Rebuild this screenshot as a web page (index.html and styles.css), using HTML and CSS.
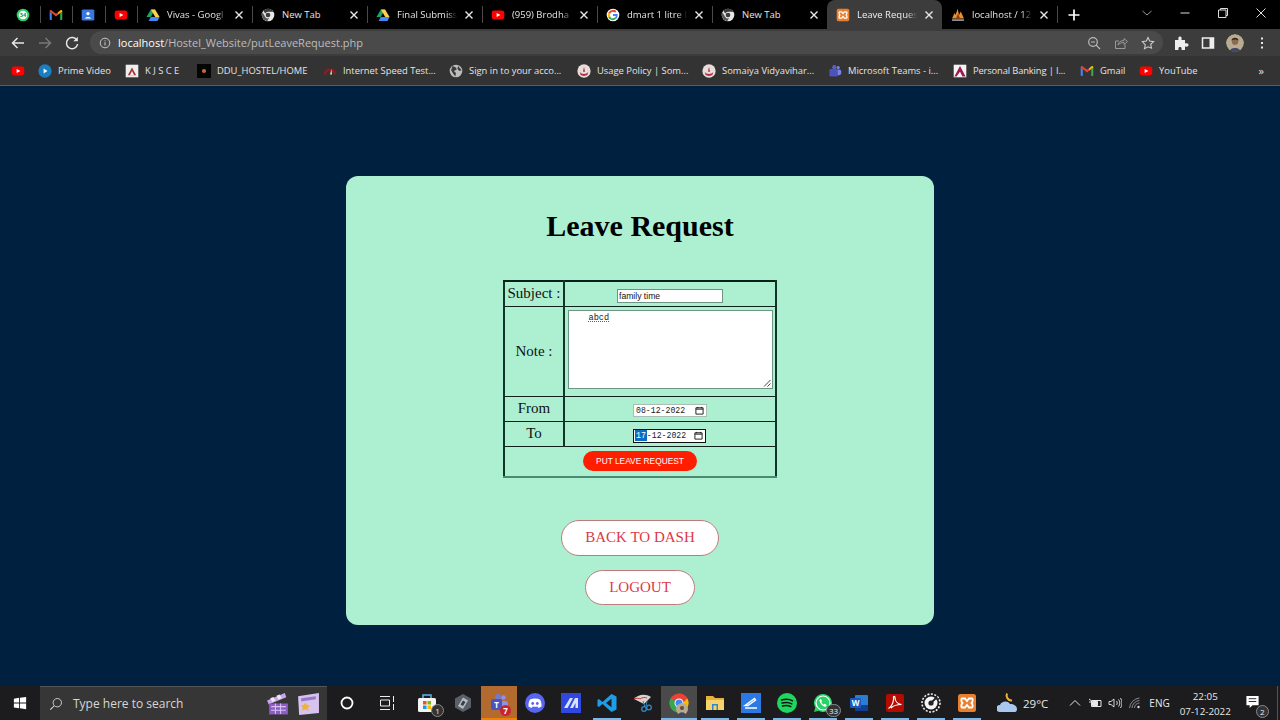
FILE: index.html
```html
<!DOCTYPE html>
<html lang="en">
<head>
<meta charset="utf-8">
<title>Leave Request</title>
<link rel="stylesheet" href="styles.css">
</head>
<body>
<svg class="defs" width="0" height="0" aria-hidden="true">
  <defs>
    <symbol id="i-yt" viewBox="0 0 20 20"><rect x="1" y="3.5" width="18" height="13" rx="3.5" fill="#f00"/><path d="M8 7l5.5 3L8 13z" fill="#fff"/></symbol>
    <symbol id="i-drive" viewBox="0 0 20 20"><path d="M7 2h6l-6.2 11H.6z" fill="#1fa463"/><path d="M13 2l6.4 11h-6.2L7 2z" fill="#ffd04b"/><path d="M6.8 13h12.6l-3 5.5H3.7z" fill="#4688f4"/></symbol>
    <symbol id="i-chrome" viewBox="0 0 20 20"><circle cx="10" cy="10" r="9" fill="#e8e8e8"/><path d="M10 1a9 9 0 0 1 7.8 4.5H10a4.5 4.5 0 0 0-3.9 2.2L3.3 4A9 9 0 0 1 10 1z" fill="#3a3a3a"/><path d="M5.7 12.2L2.2 6A9 9 0 0 0 9 19l2.6-4.6a4.600 4.600 0 0 1-5.900-2.200z" fill="#5a5a5a"/><circle cx="10" cy="10" r="3.300" fill="#3c3c3c"/></symbol>
    <symbol id="i-gmail" viewBox="0 0 20 20"><path d="M1 5.500l3 1.800V17H2.200A1.200 1.200 0 0 1 1 15.800z" fill="#4285f4"/><path d="M19 5.500l-3 1.800V17h1.800a1.200 1.200 0 0 0 1.200-1.200z" fill="#34a853"/><path d="M4 7.300L1 5.500V4.600C1 3.300 2.500 2.500 3.500 3.300L10 8.200l3-2.200v3.800l-3 2.200z" fill="#ea4335"/><path d="M13 6l3.500-2.700c1-.8 2.500 0 2.500 1.300v.9l-3 1.800-3 2.500z" fill="#fbbc04"/></symbol>
    <symbol id="i-somaiya" viewBox="0 0 20 20"><circle cx="10" cy="10" r="9.500" fill="#e8dcdc"/><path d="M4 11.500c2 3.500 10 3.500 12 0l-1 4c-2 2-8 2-10 0z" fill="#b03040"/><path d="M10 4l1.500 7h-3z" fill="#b03040"/></symbol>
    <symbol id="i-xampp" viewBox="0 0 20 20"><rect x="1" y="1" width="18" height="18" rx="2.500" fill="#e9802f"/><path d="M5 5.500h3l2 2.500 2-2.500h3c1 0 1 3-.5 4.500 1.500 1.500 1.500 4.500.5 4.500h-3l-2-2.500-2 2.500H5c-1 0-1-3 .5-4.500C4 8.500 4 5.500 5 5.500z" fill="none" stroke="#fff" stroke-width="1.800"/></symbol>
    <symbol id="i-close" viewBox="0 0 10 10"><path d="M1.500 1.500l7 7m0-7l-7 7" stroke="#e8e8e8" stroke-width="1.400" fill="none"/></symbol>
    <symbol id="i-calendar" viewBox="0 0 10 10"><path d="M1 2h8v7H1zM1 3.500h8M3 1v1.500M7 1v1.500" stroke="#111" stroke-width="1" fill="none"/></symbol>
  </defs>
</svg>

<header class="chrome">
  <div class="tabstrip">
    <div class="tab pinned"><svg class="favicon" viewBox="0 0 20 20"><circle cx="10" cy="10" r="9" fill="#25d366"/><circle cx="10" cy="10" r="6.200" fill="#fff"/><text x="10" y="13" class="svg-badge" fill="#128c4e">34</text></svg></div>
    <div class="tab pinned"><svg class="favicon"><use href="#i-gmail"/></svg></div>
    <div class="tab pinned"><svg class="favicon" viewBox="0 0 20 20"><rect x="1" y="2" width="18" height="16" rx="2" fill="#3a78e0"/><circle cx="10" cy="8" r="2.300" fill="#fff"/><path d="M5.500 15c.5-3 8.500-3 9 0z" fill="#fff"/></svg></div>
    <div class="tab pinned"><svg class="favicon"><use href="#i-yt"/></svg></div>
    <div class="tab"><svg class="favicon"><use href="#i-drive"/></svg><span class="tab-title">Vivas - Googl</span><svg class="tab-close"><use href="#i-close"/></svg></div>
    <div class="tab"><svg class="favicon"><use href="#i-chrome"/></svg><span class="tab-title plain">New Tab</span><svg class="tab-close"><use href="#i-close"/></svg></div>
    <div class="tab"><svg class="favicon"><use href="#i-drive"/></svg><span class="tab-title">Final Submissi</span><svg class="tab-close"><use href="#i-close"/></svg></div>
    <div class="tab"><svg class="favicon"><use href="#i-yt"/></svg><span class="tab-title">(959) Brodha V</span><svg class="tab-close"><use href="#i-close"/></svg></div>
    <div class="tab"><svg class="favicon" viewBox="0 0 20 20"><circle cx="10" cy="10" r="9" fill="#fff"/><path d="M10 5.500a4.500 4.500 0 0 1 3 1.200l2-2A7.500 7.500 0 0 0 3.300 6.600l2.400 1.900A4.500 4.500 0 0 1 10 5.500z" fill="#ea4335"/><path d="M5.700 11.500l-2.400 1.900a7.500 7.500 0 0 0 3 3.100l2-2a4.500 4.500 0 0 1-2.600-3z" fill="#34a853"/><path d="M3.300 6.600a7.500 7.500 0 0 0 0 6.800l2.400-1.900a4.500 4.500 0 0 1 0-3z" fill="#fbbc04"/><path d="M10 8.500v3h4.200a3.800 3.800 0 0 1-1.600 2.200l2 1.800c1.700-1.500 2.400-4.200 1.900-7z" fill="#4285f4"/><path d="M6.300 16.500a7.500 7.500 0 0 0 8.300-1l-2-1.800a4.500 4.500 0 0 1-4.300.8z" fill="#34a853"/></svg><span class="tab-title">dmart 1 litre b</span><svg class="tab-close"><use href="#i-close"/></svg></div>
    <div class="tab"><svg class="favicon"><use href="#i-chrome"/></svg><span class="tab-title plain">New Tab</span><svg class="tab-close"><use href="#i-close"/></svg></div>
    <div class="tab active"><svg class="favicon"><use href="#i-xampp"/></svg><span class="tab-title">Leave Reques</span><svg class="tab-close"><use href="#i-close"/></svg></div>
    <div class="tab no-sep-start"><svg class="favicon" viewBox="0 0 20 20"><path d="M1.500 15L5 7l1.500 3L9.500 1l2 9L14 5l4.500 10z" fill="#e8912d"/><path d="M7 15l3-7 3 7z" fill="#8f3f14"/><path d="M1.500 16h17v2.500h-17z" fill="#8a93a8"/></svg><span class="tab-title">localhost / 12</span><svg class="tab-close"><use href="#i-close"/></svg></div>
    <div class="new-tab"><svg class="win-icon" viewBox="0 0 12 12"><path d="M6 .5v11M.5 6h11" stroke="#fff" stroke-width="1.700"/></svg></div>
    <div class="window-controls">
      <span class="win-btn"><svg class="win-icon" viewBox="0 0 12 12"><path d="M1.500 4l4.500 4 4.500-4" stroke="#9a9a9a" fill="none"/></svg></span>
      <span class="win-btn"><svg class="win-icon" viewBox="0 0 12 12"><path d="M1.500 6h9" stroke="#ddd"/></svg></span>
      <span class="win-btn"><svg class="win-icon" viewBox="0 0 12 12"><path d="M1.500 3h7.500v7.500H1.500zM3.500 3V1.500H10.500V8.500H9" stroke="#ddd" fill="none"/></svg></span>
      <span class="win-btn"><svg class="win-icon" viewBox="0 0 12 12"><path d="M1.500 1.500l9 9m0-9l-9 9" stroke="#ddd" fill="none"/></svg></span>
    </div>
  </div>

  <div class="toolbar">
    <svg class="tool-icon" viewBox="0 0 16 16"><path d="M14 8H2.500M7.500 3L2.500 8l5 5" stroke="#e8e8e8" stroke-width="1.500" fill="none"/></svg>
    <svg class="tool-icon" viewBox="0 0 16 16"><path d="M2 8h11.500M8.500 3l5 5-5 5" stroke="#777" stroke-width="1.500" fill="none"/></svg>
    <svg class="tool-icon" viewBox="0 0 16 16"><path d="M13 5.500A5.600 5.600 0 1 0 13.600 9" stroke="#e8e8e8" stroke-width="1.500" fill="none"/><path d="M13.800 1.800v4.500H9.300z" fill="#e8e8e8"/></svg>
    <div class="omnibox">
      <svg class="omni-info" viewBox="0 0 12 12"><circle cx="6" cy="6" r="4.800" stroke="#c8c8c8" fill="none"/><path d="M6 5.200v3.300M6 3.300v1" stroke="#c8c8c8"/></svg>
      <span class="url"><b>localhost</b>/Hostel_Website/putLeaveRequest.php</span>
      <span class="omni-actions">
        <svg class="omni-icon" viewBox="0 0 14 14"><circle cx="6" cy="6" r="4.300" stroke="#bbb" stroke-width="1.200" fill="none"/><path d="M9.200 9.200L13 13M4 6h4" stroke="#bbb" stroke-width="1.200"/></svg>
        <svg class="omni-icon" viewBox="0 0 14 14"><path d="M11 8.500V12.500H1.500V5H5" stroke="#999" fill="none"/><path d="M4 9c.5-3 3-4.500 6-4.500V2.500L13.500 5.500 10 8.500V6.500c-2.500 0-4.500.8-6 2.500z" stroke="#999" fill="none"/></svg>
        <svg class="omni-icon" viewBox="0 0 14 14"><path d="M7 1.500l1.700 3.600 3.900.5-2.900 2.700.8 3.900L7 10.800l-3.500 1.900.8-3.900L1.400 5.600l3.900-.5z" stroke="#ccc" stroke-width="1.100" fill="none"/></svg>
      </span>
    </div>
    <div class="toolbar-end">
      <svg class="tool-icon" viewBox="0 0 16 16"><path d="M2 5h3.500C5 2 6 1.500 7 1.500S9 2 8.500 5H12v3.500c3-.5 3.500.5 3.500 1.500s-.5 2-3.500 1.500V15H8.500c.5-2.500-.5-3-1.500-3s-2 .5-1.500 3H2z" fill="#eee"/></svg>
      <svg class="tool-icon" viewBox="0 0 16 16"><path d="M2.500 3h11v10h-11z" stroke="#eee" stroke-width="1.500" fill="none"/><path d="M9.500 3h4v10h-4z" fill="#eee"/></svg>
      <svg class="tool-icon avatar" viewBox="0 0 20 20"><circle cx="10" cy="10" r="10" fill="#b9ab8f"/><path d="M4 20c0-6 12-6 12 0z" fill="#3f4763"/><circle cx="10" cy="8.500" r="3.500" fill="#8a6a50"/><path d="M6 7.500C6 3 14 3 14 7.500 12 5.500 8 5.500 6 7.500z" fill="#2a2320"/></svg>
      <svg class="tool-icon" viewBox="0 0 16 16"><path d="M8 2.500v2M8 7v2M8 11.500v2" stroke="#e8e8e8" stroke-width="2"/></svg>
    </div>
  </div>

  <nav class="bookmarks">
    <span class="bm"><svg class="favicon"><use href="#i-yt"/></svg></span>
    <span class="bm"><svg class="favicon" viewBox="0 0 20 20"><circle cx="10" cy="10" r="9.500" fill="#1a7fc0"/><path d="M8 6.500l5.500 3.500L8 13.500z" fill="#fff"/></svg>Prime Video</span>
    <span class="bm"><svg class="favicon" viewBox="0 0 20 20"><rect x="1" y="1" width="18" height="18" fill="#eee"/><path d="M4 16l6-11 6 11z" fill="#a33"/><path d="M7 16l3-6 3 6z" fill="#eee"/></svg>K J S C E</span>
    <span class="bm"><svg class="favicon" viewBox="0 0 20 20"><rect width="20" height="20" fill="#050505"/><circle cx="10" cy="10" r="3" fill="#c46a3a"/></svg>DDU_HOSTEL/HOME</span>
    <span class="bm"><svg class="favicon" viewBox="0 0 20 20"><path d="M1 15a9 9 0 0 1 18 0h-4a5 5 0 0 0-10 0z" fill="#8c1c20"/><path d="M10 15l2-8 1 8z" fill="#d8d8d8"/></svg>Internet Speed Test...</span>
    <span class="bm"><svg class="favicon" viewBox="0 0 20 20"><circle cx="10" cy="10" r="9" fill="#bdbdbd"/><path d="M5 3l5 2 1 3-4 2 3 3-1 5-3-4-3-5zM13 3l5 6-3 1-3-3z" fill="#3c3c3c"/></svg>Sign in to your acco...</span>
    <span class="bm"><svg class="favicon"><use href="#i-somaiya"/></svg>Usage Policy | Som...</span>
    <span class="bm"><svg class="favicon"><use href="#i-somaiya"/></svg>Somaiya Vidyavihar...</span>
    <span class="bm"><svg class="favicon" viewBox="0 0 20 20"><circle cx="14.500" cy="5" r="2.200" fill="#7b83eb"/><circle cx="9" cy="4.500" r="3" fill="#5b5fc7"/><rect x="11" y="8" width="8" height="8" rx="3" fill="#7b83eb"/><rect x="2" y="7" width="12" height="11" rx="2" fill="#4b53bc"/></svg>Microsoft Teams - i...</span>
    <span class="bm bm-tight"><svg class="favicon" viewBox="0 0 20 20"><rect x="1" y="1" width="18" height="18" fill="#f4f4f4"/><path d="M10 3l8 15h-4.500L10 11l-5 7H2z" fill="#a01850"/></svg>Personal Banking | I...</span>
    <span class="bm"><svg class="favicon"><use href="#i-gmail"/></svg>Gmail</span>
    <span class="bm"><svg class="favicon"><use href="#i-yt"/></svg>YouTube</span>
    <span class="bm-more">»</span>
  </nav>
</header>

<main class="page">
  <section class="card">
    <h1 class="card-title">Leave Request</h1>
    <form class="leave-form">
      <table class="leave-table">
        <tr class="row-subject">
          <th>Subject :</th>
          <td><input class="text-field" type="text" value="family time"></td>
        </tr>
        <tr class="row-note">
          <th>Note :</th>
          <td>
            <div class="note-field"><span class="note-text">abcd</span>
              <svg class="grip" viewBox="0 0 8 8"><path d="M7.500 1L1 7.500M7.500 4.500L4.500 7.500" stroke="#444" fill="none"/></svg>
            </div>
          </td>
        </tr>
        <tr class="row-date">
          <th>From</th>
          <td><span class="date-field"><span>08-12-2022</span><svg class="cal"><use href="#i-calendar"/></svg></span></td>
        </tr>
        <tr class="row-date">
          <th>To</th>
          <td><span class="date-field focused"><span><mark class="date-sel">17</mark>-12-2022</span><svg class="cal"><use href="#i-calendar"/></svg></span></td>
        </tr>
        <tr class="row-submit">
          <td colspan="2"><button class="submit-btn" type="button">PUT LEAVE REQUEST</button></td>
        </tr>
      </table>
    </form>
    <div class="card-links">
      <a class="pill-link" href="#">BACK TO DASH</a>
      <a class="pill-link" href="#">LOGOUT</a>
    </div>
  </section>
</main>

<footer class="taskbar">
  <span class="start"><svg class="start-icon" viewBox="0 0 16 16"><path d="M1 3l6-.9V7.500H1zM8 2l7-1v6.500H8zM1 8.500h6V14l-6-.9zM8 8.500h7V15l-7-1z" fill="#fff"/></svg></span>
  <div class="search">
    <svg class="search-icon" viewBox="0 0 16 16"><circle cx="9.500" cy="6.500" r="4.800" stroke="#ddd" fill="none"/><path d="M6 10L1.500 14.500" stroke="#ddd" stroke-width="1.200"/></svg>
    <span class="search-text">Type here to search</span>
    <svg class="search-art" viewBox="0 0 24 24"><path d="M2 9l17-7 1.500 4L3.500 13z" fill="#c9a6ea"/><path d="M5 7l3-1.200 2 3.500-3 1.200zM11 4.600l3-1.200 2 3.500-3 1.200z" fill="#f0e6fa"/><path d="M4 12h18v10.500H4z" fill="#8d5cc6"/><path d="M6 15h14M6 18.500h14M10 12v10M15 12v10" stroke="#d8c4ef"/></svg>
    <svg class="search-art" viewBox="0 0 24 24"><path d="M2 5l20-3v19L3 23z" fill="#d7c4ee"/><path d="M5 7l14-2v3L5 10z" fill="#9a78c8"/><path d="M9 11l1.500 2.500 3 .5-2 2 .5 3-3-1.500-3 1.500.5-3-2-2 3-.5z" fill="#f0b03a"/></svg>
  </div>
  <span class="task-wide"><svg class="task-icon" viewBox="0 0 20 20"><circle cx="10" cy="10" r="5.500" stroke="#fff" stroke-width="1.800" fill="none"/></svg></span>
  <span class="task-wide"><svg class="task-icon" viewBox="0 0 20 20"><path d="M3 3.500h10M3 16.500h10M3.500 7h9v6h-9zM16.500 3v6M16.500 11v6" stroke="#eee" fill="none"/></svg></span>
  <div class="task-list">
    <span class="task"><svg class="task-icon" viewBox="0 0 20 20"><rect x="1" y="5" width="18" height="14" rx="1.500" fill="#f4f4f4"/><path d="M6 5V2h8v3" stroke="#5fb7e8" fill="none" stroke-width="1.500"/><path d="M6 8h3.500v3.500H6z" fill="#f25022"/><path d="M10.500 8H14v3.500h-3.500z" fill="#7fba00"/><path d="M6 12.500h3.500V16H6z" fill="#00a4ef"/><path d="M10.500 12.500H14V16h-3.500z" fill="#ffb900"/></svg><b class="count">1</b></span>
    <span class="task"><svg class="task-icon" viewBox="0 0 20 20"><path d="M10 1l8 4.500v9L10 19l-8-4.500v-9z" fill="#59606a"/><path d="M10 4.500l5 3-5 8.500-5-3z" fill="#b8bcc2"/><path d="M10 7.500l2.500 1.500-2.500 4-2.500-1.500z" fill="#3a3f46"/></svg></span>
    <span class="task current-teams"><svg class="task-icon" viewBox="0 0 20 20"><circle cx="14.500" cy="4.500" r="2.200" fill="#8d92e8"/><circle cx="9" cy="4" r="3" fill="#7378d8"/><rect x="11" y="8" width="8" height="8" rx="3" fill="#8d92e8"/><rect x="2" y="6" width="11" height="11" rx="2" fill="#4b53bc"/><text x="7.500" y="14.500" class="svg-letter">T</text></svg><b class="teams-badge">7</b></span>
    <span class="task"><svg class="task-icon" viewBox="0 0 20 20"><circle cx="10" cy="10" r="10" fill="#5865f2"/><path d="M5 6.500c3-1.500 7-1.500 10 0 1.300 2.300 1.800 4.700 1.500 7-1.300 1-2.500 1.300-3.300 1.300l-.8-1.300c-1.600.4-3.200.4-4.800 0l-.8 1.300c-.8 0-2-.3-3.300-1.300-.3-2.300.2-4.700 1.500-7z" fill="#fff"/><circle cx="7.700" cy="10.500" r="1.400" fill="#5865f2"/><circle cx="12.300" cy="10.500" r="1.400" fill="#5865f2"/></svg></span>
    <span class="task"><svg class="task-icon" viewBox="0 0 20 20"><rect width="20" height="20" fill="#3048e0"/><path d="M3 15L9 5h3L6.500 15zM9 15l5-10h3v10h-2.500V10L12 15z" fill="#d8e2ff"/></svg></span>
    <span class="task running"><svg class="task-icon" viewBox="0 0 20 20"><path d="M14.500 1L19.500 3.500v13L14.500 19 5.500 11 1.800 14 .5 13V7l1.300-1L5.500 9z" fill="#1f9ce8"/><path d="M14.500 5.800L9 10l5.500 4.200z" fill="#1a1a1c"/></svg></span>
    <span class="task"><svg class="task-icon" viewBox="0 0 20 20"><path d="M1 6c3-4 11-6 17-2l-7 7z" fill="#d9d3cd"/><path d="M1 6c3-1 5-1 6 0M7 6c2-1.500 5-2 7-1" stroke="#c23838" fill="none"/><circle cx="11" cy="16" r="2.300" stroke="#2f88c6" stroke-width="1.300" fill="none"/><circle cx="16" cy="14.500" r="2.300" stroke="#2f88c6" stroke-width="1.300" fill="none"/><path d="M10 8l2 6M14 8l-1 5" stroke="#2f88c6"/></svg></span>
    <span class="task running current"><svg class="task-icon" viewBox="0 0 20 20"><circle cx="10" cy="10" r="9.500" fill="#ea4335"/><path d="M10 .5a9.500 9.500 0 0 1 8.200 4.700L10 10z" fill="#ea4335"/><path d="M18.200 5.200A9.500 9.500 0 0 1 10 19.500L14 10z" fill="#fbbc04"/><path d="M1.800 5.200A9.500 9.500 0 0 0 10 19.500L10 10z" fill="#34a853"/><circle cx="10" cy="10" r="4.500" fill="#fff"/><circle cx="10" cy="10" r="3.500" fill="#4285f4"/></svg><svg class="profile-mini" viewBox="0 0 20 20"><circle cx="10" cy="10" r="10" fill="#b9ab8f"/><path d="M4 20c0-6 12-6 12 0z" fill="#3f4763"/><circle cx="10" cy="8.500" r="3.500" fill="#6b4f3a"/></svg></span>
    <span class="task running"><svg class="task-icon" viewBox="0 0 20 20"><path d="M1 3h7l2 2h9v4H1z" fill="#e6b13c"/><path d="M1 7h18v10H1z" fill="#f7d36b"/><path d="M7 11h6v6h-1.500v-4.500h-3V17H7z" fill="#2f88c6"/></svg></span>
    <span class="task running"><svg class="task-icon" viewBox="0 0 20 20"><rect width="20" height="20" fill="#2b7ae4"/><path d="M4 12.500l9.500-7 1 1.500L7 12.500zM4 15h12" stroke="#fff" stroke-width="1.400" fill="none"/></svg></span>
    <span class="task running"><svg class="task-icon" viewBox="0 0 20 20"><circle cx="10" cy="10" r="10" fill="#1ed760"/><path d="M4.500 7c3.500-1 8-1 11 .8M5 10c3-.8 7-.8 9.800.8M5.500 13c2.500-.7 6-.6 8.300.7" stroke="#111" stroke-width="1.500" fill="none" stroke-linecap="round"/></svg></span>
    <span class="task running"><svg class="task-icon" viewBox="0 0 20 20"><path d="M10 1a9 9 0 0 0-7.700 13.600L1 19l4.500-1.200A9 9 0 1 0 10 1z" fill="#25d366"/><circle cx="10" cy="10" r="7" fill="none" stroke="#fff" stroke-width="1.200"/><path d="M7 6c-1 1.500-.5 3 1 5s3.500 3 5 2.500l.8-1.500-2.300-1.200-.9.800c-1-.4-1.900-1.500-2.300-2.500l.8-.8L8 6z" fill="#fff"/></svg><b class="count wide">33</b></span>
    <span class="task running"><svg class="task-icon" viewBox="0 0 20 20"><rect x="6" y="2" width="13" height="16" rx="1" fill="#2b7cd3"/><rect x="6" y="12" width="13" height="6" fill="#103f91"/><rect x="1" y="5" width="11" height="10" rx="1" fill="#185abd"/><text x="6.500" y="13" class="svg-letter">W</text></svg></span>
    <span class="task running"><svg class="task-icon" viewBox="0 0 20 20"><rect x="1" y="1" width="18" height="18" rx="2" fill="#b30b00"/><path d="M3.500 15.500c4-2.500 5.500-8 5-11-.3-1.500 1.500-1.500 1.500 0 0 3.500 2.500 6.500 6.500 7-3.500 0-8 1-10.500 3.500" stroke="#fff" stroke-width="1.200" fill="none"/></svg></span>
    <span class="task running"><svg class="task-icon" viewBox="0 0 20 20"><circle cx="10" cy="10" r="9" stroke="#eee" stroke-width="1.600" stroke-dasharray="2 1.500" fill="none"/><circle cx="10" cy="10" r="6.500" fill="#f5f5f5"/><circle cx="10" cy="10" r="2.600" fill="#222"/><path d="M10 10l6-6" stroke="#222" stroke-width="1.800"/></svg></span>
    <span class="task running"><svg class="task-icon"><use href="#i-xampp"/></svg></span>
  </div>
  <div class="weather">
    <svg class="weather-icon" viewBox="0 0 22 22"><path d="M10 1.500a5 5 0 0 0 5 7 5 5 0 0 1-5-7z" fill="#f2b632" stroke="#f2b632" stroke-width="2"/><path d="M3 20a3.500 3.500 0 0 1 0-7c1-4 8-5 10-1 4 0 7 2 7 5 0 2-1 3-2 3z" fill="#a9c8ee"/></svg>
    <span class="temp">29°C</span>
  </div>
  <div class="tray">
    <svg class="tray-icon" viewBox="0 0 14 14"><path d="M2 9.500L7 4.500l5 5" stroke="#e8e8e8" fill="none"/></svg>
    <svg class="tray-icon" viewBox="0 0 14 14"><path d="M3.500 4.500h9.500v6H3.500z" stroke="#e8e8e8" fill="none"/><path d="M4.500 5.500h5v4h-5zM1 3l2 1.500M1 6h2" stroke="#e8e8e8" fill="#e8e8e8"/></svg>
    <svg class="tray-icon" viewBox="0 0 14 14"><path d="M1 5.500h2l3-2.500v8L3 8.500H1zM8.500 5c1 1 1 3 0 4M10.500 3.500c1.800 2 1.800 5 0 7M12.500 2c2 3 2 7 0 10" stroke="#e8e8e8" fill="none" stroke-width=".9"/></svg>
    <svg class="tray-icon" viewBox="0 0 14 14"><path d="M1.500 12a11 11 0 0 1 10-10M4 12a8 8 0 0 1 7.500-7.500M6.500 12a5 5 0 0 1 5-5" stroke="#8a8a8a" fill="none"/><circle cx="10.500" cy="11" r="1.200" fill="#ddd"/></svg>
    <span class="lang">ENG</span>
    <span class="clock"><span>22:05</span><span>07-12-2022</span></span>
    <span class="notif"><svg class="notif-icon" viewBox="0 0 16 16"><path d="M1.500 2h13v10H8l-3 3v-3H1.500z" fill="#fff"/><path d="M4 5h8M4 8h8" stroke="#222"/></svg><b class="count">2</b></span>
    <span class="desktop-edge"></span>
  </div>
</footer>
</body>
</html>
```
FILE: styles.css
```css
* { box-sizing: border-box; }

html, body { height: 100%; }

body {
  margin: 0;
  display: flex;
  flex-direction: column;
  width: 1280px;
  height: 720px;
  overflow: hidden;
  font-family: "Open Sans", "Liberation Sans", sans-serif;
  background: #00203f;
}

.defs { position: absolute; }

/* Browser chrome */
.chrome { flex: none; color: #e4e4e4; }

.tabstrip {
  display: flex;
  height: 29px;
  padding-left: 7px;
  background: #000;
}

.tab {
  position: relative;
  display: flex;
  align-items: center;
  width: 115px;
  padding: 0 8px 0 9px;
  font-size: 9.5px;
  white-space: nowrap;
}

.tab::before {
  content: "";
  position: absolute;
  left: 0;
  top: 6px;
  height: 17px;
  width: 1px;
  background: #4a4a4a;
}

.tab.pinned {
  width: 32.5px;
  padding: 0;
  justify-content: center;
}

.tab.pinned:first-child::before { display: none; }

.tab.active {
  background: #3c3c3c;
  border-radius: 8px 8px 0 0;
  color: #f0f0f0;
}

.tab.active::before,
.tab.no-sep-start::before { display: none; }

.favicon {
  flex: none;
  width: 14px;
  height: 14px;
}

.svg-badge {
  font: 700 8px "Open Sans", sans-serif;
  text-anchor: middle;
}

.svg-letter {
  font: 700 8px "Open Sans", sans-serif;
  text-anchor: middle;
  fill: #fff;
}

.tab-title {
  flex: 1;
  min-width: 0;
  margin-left: 7px;
  -webkit-mask-image: linear-gradient(to right, #000 80%, transparent 97%);
  mask-image: linear-gradient(to right, #000 80%, transparent 97%);
}

.tab-title.plain {
  -webkit-mask-image: none;
  mask-image: none;
}

.tab-close {
  flex: none;
  width: 10px;
  height: 10px;
  margin-left: 5px;
}

.new-tab {
  position: relative;
  display: flex;
  align-items: center;
  justify-content: center;
  width: 34px;
}

.new-tab::before {
  content: "";
  position: absolute;
  left: 0;
  top: 6px;
  height: 17px;
  width: 1px;
  background: #4a4a4a;
}

.window-controls {
  display: flex;
  margin-left: auto;
}

.win-btn {
  display: flex;
  align-items: center;
  justify-content: center;
  width: 38px;
  padding-bottom: 4px;
}

.win-icon { width: 12px; height: 12px; }

.toolbar {
  display: flex;
  align-items: center;
  height: 27px;
  padding-left: 10px;
  background: #3c3c3c;
}

.tool-icon {
  flex: none;
  width: 16px;
  height: 16px;
  margin-right: 11px;
}

.omnibox {
  flex: none;
  display: flex;
  align-items: center;
  width: 1073px;
  height: 23px;
  margin-left: -1px;
  padding: 0 8px 0 9px;
  border-radius: 12px;
  background: #4a4a4a;
}

.omni-info { width: 12px; height: 12px; }

.url {
  margin-left: 7px;
  font-size: 11px;
  color: #bdbdbd;
}

.url b { font-weight: 400; color: #fff; }

.omni-actions {
  display: flex;
  gap: 13px;
  margin-left: auto;
}

.omni-icon { width: 14px; height: 14px; }

.toolbar-end {
  display: flex;
  align-items: center;
  margin-left: 10px;
}

.toolbar-end .tool-icon { margin-right: 11px; }

.toolbar-end .avatar {
  width: 18px;
  height: 18px;
  margin: 0 10px 0 -1px;
  border-radius: 50%;
}

.toolbar-end .tool-icon:last-child { margin-right: 0; }

.bookmarks {
  display: grid;
  grid-template-columns: 14px 74px 59px 113px 113px 115px 112px 113px 112px 114px 46px 58px 1fr;
  column-gap: 13px;
  align-items: center;
  height: 30px;
  padding-left: 11px;
  background: #333;
  border-bottom: 1px solid #56606a;
  font-size: 9.4px;
  white-space: nowrap;
}

.bm {
  display: flex;
  align-items: center;
  gap: 6px;
}

.bm-tight { letter-spacing: -0.15px; }

.bm-more {
  justify-self: end;
  margin-right: 16px;
  font-size: 11px;
}

/* Page */
.page {
  flex: 1;
  display: flex;
  justify-content: center;
  padding-top: 90px;
  background: #00203f;
}

.card {
  display: flex;
  flex-direction: column;
  align-items: center;
  width: 588px;
  height: 449px;
  padding-top: 32px;
  border-radius: 12px;
  background: #adefd1;
  font-family: "Liberation Serif", "Times New Roman", serif;
  color: #000;
}

.card-title {
  margin: 0 0 36px;
  font-size: 30px;
  line-height: 36px;
  font-weight: 700;
}

.leave-table {
  width: 274px;
  border-collapse: collapse;
  table-layout: fixed;
  border: 2px solid #0e3527;
  border-top-color: #0a1f17;
}

.leave-table th,
.leave-table td {
  padding: 0;
  text-align: center;
  vertical-align: middle;
  border: 1px solid #10201a;
  font-size: 15px;
  font-weight: 400;
}

.leave-table th {
  width: 60px;
  border-right: 2px solid #0e3527;
  color: #111;
}

.row-subject { height: 25px; }
.row-note { height: 90px; }
.row-date { height: 25px; }
.row-submit { height: 31px; }

.leave-table .row-submit td { border-bottom: 2px solid #4a8a70; }

.text-field {
  display: block;
  width: 106px;
  height: 14px;
  margin: 4px auto 0;
  padding: 0 1px;
  border: 1px solid #6d9583;
  background: #fff;
  font: 8.6px "Liberation Sans", Arial, sans-serif;
  color: #111;
}

.note-field {
  position: relative;
  width: 205px;
  height: 79px;
  margin: 0 auto 4px;
  padding: 1px 0 0 20px;
  border: 1px solid #6d9583;
  background: #fff;
  text-align: left;
  font: 8.6px/12px "Liberation Mono", "Courier New", monospace;
}

.note-text {
  text-decoration: underline dotted #d0342c 1px;
  text-underline-offset: 1px;
  color: #222;
}

.grip {
  position: absolute;
  right: 1px;
  bottom: 1px;
  width: 8px;
  height: 8px;
}

.date-field {
  display: flex;
  align-items: center;
  justify-content: space-between;
  width: 74px;
  height: 13px;
  margin: 4px auto 0;
  padding: 0 2px;
  border: 1px solid #a9bdb3;
  background: #fff;
  font: 8.2px "Liberation Mono", "Courier New", monospace;
  color: #222;
}

.date-field.focused {
  width: 73px;
  height: 14px;
  margin-left: 68px;
  border: 1px solid #111;
  outline: 1px solid #111;
  outline-offset: -1px;
  padding-left: 1px;
}

.date-sel {
  padding: 1px;
  background: #0a6cc2;
  color: #fff;
}

.cal { width: 9px; height: 9px; }

.submit-btn {
  display: block;
  width: 114px;
  height: 20px;
  margin: 0 auto;
  padding: 0;
  border: 0;
  border-radius: 10px;
  background: #ff1e00;
  color: #fff;
  font: 8.35px "Liberation Sans", Arial, sans-serif;
}

.card-links {
  display: flex;
  flex-direction: column;
  align-items: center;
  gap: 14px;
  margin-top: 42px;
}

.pill-link {
  height: 35.5px;
  padding: 0 23px;
  border: 1px solid #bf7c7c;
  border-radius: 18px;
  background: #fff;
  color: #dc3a48;
  font-size: 15px;
  line-height: 32px;
  text-decoration: none;
}

/* Taskbar */
.taskbar {
  flex: none;
  display: flex;
  align-items: center;
  height: 34px;
  background: #1c1c1e;
  color: #e8e8e8;
}

.start {
  display: flex;
  align-items: center;
  justify-content: center;
  width: 40px;
  height: 100%;
}

.start-icon { width: 14px; height: 14px; }

.search {
  display: flex;
  align-items: center;
  width: 287px;
  height: 100%;
  padding-left: 9px;
  border-top: 1px solid #555;
  background: #363636;
}

.search-icon { width: 14px; height: 14px; }

.search-text {
  flex: 1;
  margin-left: 10px;
  font-size: 12px;
  color: #d6d6d6;
}

.search-art { width: 25px; height: 25px; margin-right: 6px; }

.task-wide {
  display: flex;
  align-items: center;
  justify-content: center;
  width: 40px;
  height: 100%;
}

.task-list {
  display: flex;
  height: 100%;
  margin-left: 2px;
}

.task {
  position: relative;
  display: flex;
  align-items: center;
  justify-content: center;
  width: 36px;
  height: 100%;
}

.task-icon { width: 20px; height: 20px; }

.task.running::after {
  content: "";
  position: absolute;
  left: 4px;
  right: 4px;
  bottom: 0;
  height: 2px;
  background: #76b9ed;
}

.task.current { background: #4a4a4a; }
.task.current::after { left: 0; right: 0; }

.current-teams { background: #b36a2e; }

.current-teams::after {
  content: "";
  position: absolute;
  left: 0;
  right: 0;
  bottom: 0;
  height: 2px;
  background: #f77f00;
}

.profile-mini {
  position: absolute;
  left: 15px;
  top: 17px;
  width: 12px;
  height: 12px;
}

.count {
  position: absolute;
  right: 1px;
  bottom: 3px;
  min-width: 13px;
  height: 13px;
  border: 1px solid #8a8a8a;
  border-radius: 7px;
  background: #333;
  color: #eee;
  font-size: 8px;
  font-weight: 400;
  line-height: 11px;
  text-align: center;
}

.count.wide { min-width: 15px; right: 0; }

.teams-badge {
  position: absolute;
  right: 6px;
  bottom: 4px;
  width: 11px;
  height: 11px;
  border-radius: 50%;
  background: #c4262e;
  color: #fff;
  font-size: 8px;
  line-height: 11px;
  text-align: center;
}

.weather {
  display: flex;
  align-items: center;
  margin-left: 12px;
  gap: 4px;
}

.weather-icon { width: 22px; height: 22px; }

.temp { font-size: 11.5px; }

.tray {
  display: flex;
  align-items: center;
  flex: 1;
  height: 100%;
  margin-left: 20px;
}

.tray-icon { width: 14px; height: 14px; margin-right: 6px; }

.lang { margin-left: 1px; font-size: 10px; }

.clock {
  display: flex;
  flex-direction: column;
  align-items: center;
  margin-left: 10px;
  padding-top: 2px;
  font-size: 9.8px;
  line-height: 15px;
}

.notif {
  position: relative;
  display: flex;
  align-items: center;
  margin-left: 14px;
  height: 100%;
}

.notif-icon { width: 15px; height: 15px; margin-bottom: 4px; }

.notif .count {
  right: -9px;
  bottom: 2px;
}

.desktop-edge {
  width: 1px;
  height: 100%;
  margin-left: auto;
  margin-right: 2px;
  background: #555;
}
```
